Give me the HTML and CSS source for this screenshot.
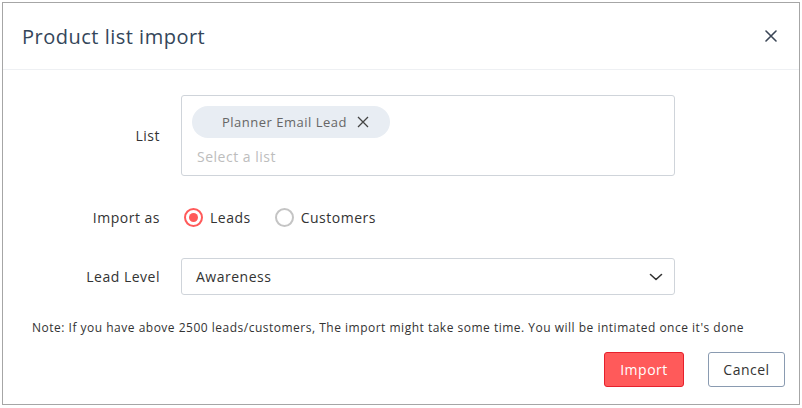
FILE: index.html
```html
<!DOCTYPE html>
<html>
<head>
<meta charset="utf-8">
<link rel="stylesheet" href="styles.css">
</head>
<body>
<div class="dialog">
  <div class="header">
    <h1 class="title">Product list import</h1>
    <button class="close" aria-label="Close">
      <svg width="12" height="12" viewBox="0 0 12 12"><path d="M1 1L11 11M11 1L1 11" stroke="#3b4656" stroke-width="1.6" stroke-linecap="round"/></svg>
    </button>
  </div>
  <div class="body">
    <div class="row row-list">
      <label class="label">List</label>
      <div class="multi">
        <span class="chip">Planner Email Lead
          <svg class="chip-x" width="12" height="12" viewBox="0 0 12 12"><path d="M1 1L11 11M11 1L1 11" stroke="#444" stroke-width="1.3"/></svg>
        </span>
        <span class="placeholder">Select a list</span>
      </div>
    </div>
    <div class="row row-radio">
      <label class="label">Import as</label>
      <div class="radios">
        <span class="radio checked"><span class="dot"></span></span><span class="rlabel">Leads</span>
        <span class="radio"></span><span class="rlabel">Customers</span>
      </div>
    </div>
    <div class="row row-select">
      <label class="label">Lead Level</label>
      <div class="select">
        <span>Awareness</span>
        <svg width="14" height="8" viewBox="0 0 14 8"><path d="M1.5 1.5L7 6.5L12.5 1.5" fill="none" stroke="#333" stroke-width="1.6" stroke-linecap="round" stroke-linejoin="round"/></svg>
      </div>
    </div>
    <p class="note">Note: If you have above 2500 leads/customers, The import might take some time. You will be intimated once it's done</p>
    <div class="footer">
      <button class="btn primary">Import</button>
      <button class="btn secondary">Cancel</button>
    </div>
  </div>
</div>
</body>
</html>
```
FILE: styles.css
```css
* { box-sizing: border-box; }
html, body { margin: 0; padding: 0; background: #ffffff; }
body { font-family: "Open Sans", "Liberation Sans", sans-serif; padding: 2px 2px 0 2px; letter-spacing: 0.5px; }
.dialog {
  width: 798px;
  height: 403px;
  border: 1px solid #a6a6a6;
  background: #fff;
  box-shadow: 0 2px 0 #e3e8f0;
}
.header {
  height: 67px;
  border-bottom: 1px solid #eef0f3;
  display: flex;
  align-items: center;
  justify-content: space-between;
  padding: 0 22px 0 19px;
}
.title {
  margin: 0;
  font-weight: 400;
  font-size: 20px;
  color: #34465a;
  letter-spacing: 0.5px;
}
.close {
  border: 0; background: none; padding: 0; margin: 0;
  width: 12px; height: 12px; display: flex; cursor: pointer;
}
.body { padding: 25px 14px 0 28px; }
.row { display: flex; align-items: center; }
.label {
  width: 129px;
  text-align: right;
  margin-right: 21px;
  font-size: 14px;
  color: #333;
}
.multi {
  width: 494px;
  height: 81px;
  border: 1px solid #cfd4da;
  border-radius: 3px;
  padding: 10px 10px 0 10px;
  display: flex;
  flex-direction: column;
  align-items: flex-start;
}
.chip {
  display: inline-flex;
  align-items: center;
  height: 32px;
  padding: 0 21px 0 30px;
  background: #e8edf3;
  border-radius: 16px;
  font-size: 13px;
  color: #666;
}
.chip-x { margin-left: 10px; }
.placeholder {
  margin: 9px 0 0 5px;
  font-size: 14px;
  color: #bdbdbd;
}
.row-radio { margin-top: 30px; height: 22px; }
.radios { display: flex; align-items: center; padding-left: 3px; }
.radio {
  width: 19px; height: 19px;
  border-radius: 50%;
  border: 2px solid #c4c4c4;
  display: inline-flex; align-items: center; justify-content: center;
}
.radio.checked { border-color: #ff5a5a; }
.dot { width: 9px; height: 9px; border-radius: 50%; background: #ff5a5a; }
.rlabel { font-size: 14px; color: #333; margin-left: 7px; margin-right: 24px; }
.row-select { margin-top: 30px; }
.select {
  width: 494px;
  height: 37px;
  border: 1px solid #cfd4da;
  border-radius: 3px;
  display: flex;
  align-items: center;
  justify-content: space-between;
  padding: 0 11px 0 14px;
  font-size: 14px;
  color: #333;
}
.note {
  margin: 25px 0 0 1px;
  font-size: 12px;
  color: #333;
  line-height: 16px;
}
.footer {
  display: flex;
  justify-content: flex-end;
  margin-top: 16px;
}
.btn {
  font-family: "Open Sans", "Liberation Sans", sans-serif;
  font-size: 14px;
  letter-spacing: 0.5px;
  height: 35px;
  border-radius: 3px;
  cursor: pointer;
}
.primary {
  width: 80px;
  background: #ff5a5a;
  border: 1px solid #e6202c;
  color: #fff;
  margin-right: 24px;
}
.secondary {
  width: 77px;
  background: #fff;
  border: 1px solid #8a9bb1;
  color: #333;
}
```
